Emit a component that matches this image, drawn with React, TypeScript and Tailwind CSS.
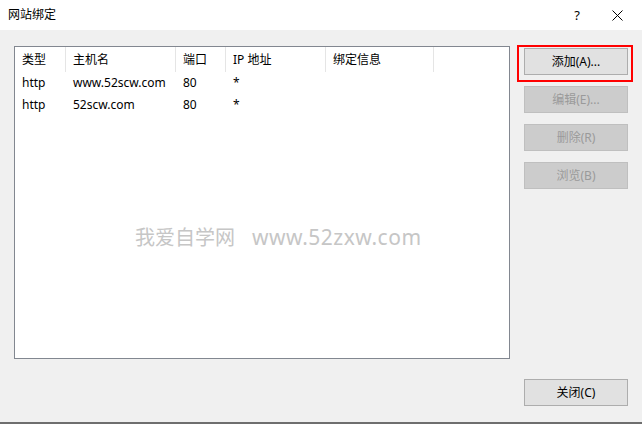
const font = 'font-["Microsoft_YaHei","Noto_Sans","Noto_Sans_CJK_SC",sans-serif]'

const columns = [
  { label: '类型', width: 'w-[51px]' },
  { label: '主机名', width: 'w-[110px]' },
  { label: '端口', width: 'w-[50px]' },
  { label: 'IP 地址', width: 'w-[100px]' },
  { label: '绑定信息', width: 'w-[108px]' },
]

const rows = [
  ['http', 'www.52scw.com', '80', '*', ''],
  ['http', '52scw.com', '80', '*', ''],
]

function Button({ children, disabled }: { children: React.ReactNode; disabled?: boolean }) {
  return (
    <div
      className={`h-[27px] w-[104px] flex items-center justify-center text-[12px] border ${
        disabled ? 'bg-[#cccccc] border-[#bfbfbf] text-[#9a9a9a]' : 'bg-[#e1e1e1] border-[#adadad] text-black'
      }`}
    >
      {children}
    </div>
  )
}

export default function App() {
  return (
    <div className={`w-[642px] h-[424px] flex flex-col bg-[#f0f0f0] ${font}`}>
      <div className="h-[30px] bg-white flex items-center shrink-0">
        <span className="pl-[8px] text-[12px] text-black">网站绑定</span>
        <span className="ml-auto mr-[32px] text-[13px] text-black leading-none">?</span>
        <svg width="11" height="11" viewBox="0 0 11 11" className="mr-[19px]">
          <path d="M0.5 0.5 L10.5 10.5 M10.5 0.5 L0.5 10.5" stroke="#000" strokeWidth="1" />
        </svg>
      </div>

      <div className="relative flex-1 flex pt-[16px] pl-[14px] pb-[16px]">
        <div className="relative w-[496px] h-[313px] bg-white border border-[#828790]">
          <div className="flex h-[25px]">
            {columns.map((c) => (
              <div key={c.label} className={`${c.width} flex items-center pl-[7px] text-[12px] text-black border-r border-[#e5e5e5]`}>
                {c.label}
              </div>
            ))}
          </div>
          {rows.map((r, i) => (
            <div key={i} className="flex h-[22px]">
              {r.map((cell, j) => (
                <div key={j} className={`${columns[j].width} flex items-center pl-[7px] text-[12px] text-black`}>
                  {cell}
                </div>
              ))}
            </div>
          ))}
          <div className="absolute left-[120px] top-[180px] flex items-center gap-[17px] text-[#c6c6c6] leading-none">
            <span className="text-[20px]">我爱自学网</span>
            <span className="text-[21px] tracking-[0.5px]">www.52zxw.com</span>
          </div>
        </div>

        <div className="ml-[14px] pt-[2px] flex flex-col">
          <div className="flex flex-col gap-[11px]">
            <Button>添加(A)...</Button>
            <Button disabled>编辑(E)...</Button>
            <Button disabled>删除(R)</Button>
            <Button disabled>浏览(B)</Button>
          </div>
          <div className="mt-auto">
            <Button>关闭(C)</Button>
          </div>
        </div>

        <div className="absolute left-[517px] top-[15px] w-[116px] h-[37px] border-2 border-[#ff0000]" />
      </div>

      <div className="h-[2px] bg-[#6e6e6e] shrink-0" />
    </div>
  )
}
